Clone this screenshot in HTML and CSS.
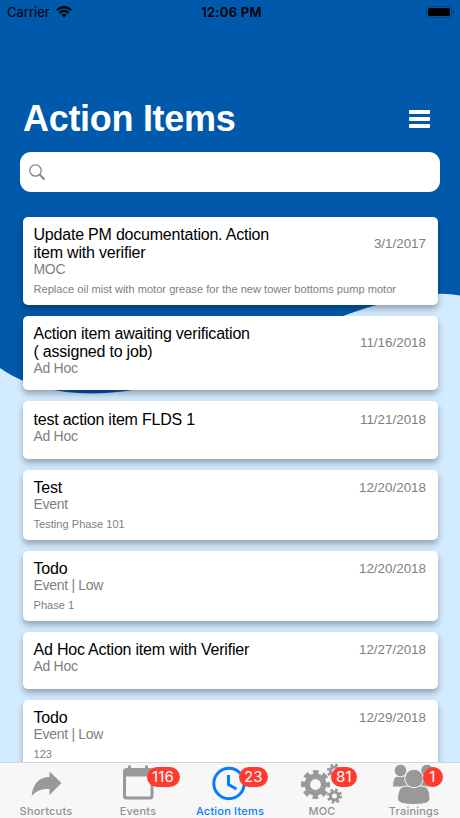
FILE: index.html
```
<!DOCTYPE html>
<html lang="en">
<head>
    <meta charset="UTF-8">
    <meta name="viewport" content="width=device-width, initial-scale=1.0">
    <title>Action Items</title>
    <link rel="stylesheet" href="styles.css">
</head>
<body>
    <!-- Background wave -->
    <svg class="wave" viewBox="0 0 460 818">
        <path fill="#0059ab" d="M0 0H460V295.500Q442 292 420 295.500C396 299 372 305.500 343 316C270 342 190 383 122 391.500C76 397 33 391 0 368Z"/>
    </svg>

    <div class="screen">
        <!-- Status bar -->
        <div class="status">
            <div class="carrier">
                <span>Carrier</span>
                <svg width="16" height="12" viewBox="0 0 16 12" fill="none" stroke="#000" stroke-width="2.200">
                    <path d="M.8 4.300Q8-2.300 15.200 4.300M3.300 7Q8 2.800 12.700 7"/>
                    <path d="M5.300 8.800Q8 6.500 10.700 8.800L8 11.600Z" fill="#000" stroke="none"/>
                </svg>
            </div>
            <div class="time">12:06 PM</div>
            <svg class="battery" width="29" height="12" viewBox="0 0 29 12">
                <rect x=".5" y=".5" width="25" height="11" rx="3" fill="none" stroke="#06427d"/>
                <rect x="2" y="2" width="22" height="8" rx="1.500"/>
                <path d="M27 4.500q1.500 1.500 0 3z"/>
            </svg>
        </div>

        <header>
            <h1>Action Items</h1>
            <div class="menu"><span></span><span></span><span></span></div>
        </header>

        <div class="search">
            <svg width="17" height="17" viewBox="0 0 17 17" fill="none" stroke="#808080">
                <circle cx="6.500" cy="6.500" r="5.700" stroke-width="1.200"/>
                <path d="M10.700 10.700L15.500 15.500" stroke-width="1.900"/>
            </svg>
        </div>

        <main class="list">
            <div class="card card-tall">
                <div class="row">
                    <h2>Update PM documentation. Action<br>item with verifier</h2>
                    <time>3/1/2017</time>
                </div>
                <p class="type">MOC</p>
                <p class="desc">Replace oil mist with motor grease for the new tower bottoms pump motor</p>
            </div>
            <div class="card card-double">
                <div class="row">
                    <h2>Action item awaiting verification<br>( assigned to job)</h2>
                    <time>11/16/2018</time>
                </div>
                <p class="type">Ad Hoc</p>
            </div>
            <div class="card card-short">
                <div class="row"><h2>test action item FLDS 1</h2><time>11/21/2018</time></div>
                <p class="type">Ad Hoc</p>
            </div>
            <div class="card">
                <div class="row"><h2>Test</h2><time>12/20/2018</time></div>
                <p class="type">Event</p>
                <p class="desc">Testing Phase 101</p>
            </div>
            <div class="card">
                <div class="row"><h2>Todo</h2><time>12/20/2018</time></div>
                <p class="type">Event | Low</p>
                <p class="desc">Phase 1</p>
            </div>
            <div class="card card-short">
                <div class="row"><h2>Ad Hoc Action item with Verifier</h2><time>12/27/2018</time></div>
                <p class="type">Ad Hoc</p>
            </div>
            <div class="card">
                <div class="row"><h2>Todo</h2><time>12/29/2018</time></div>
                <p class="type">Event | Low</p>
                <p class="desc">123</p>
            </div>
        </main>

        <!-- Tab bar -->
        <nav>
            <a class="tab">
                <svg width="44" height="42" viewBox="0 0 44 42" fill="#999">
                    <path d="M7.500 33C9 21 15 14 25.500 14V8.500L37.500 20L25.500 32V26C18 25.500 12 28 7.500 33Z"/>
                </svg>
                <span>Shortcuts</span>
            </a>
            <a class="tab">
                <svg width="44" height="42" viewBox="0 0 44 42" fill="#999">
                    <path fill-rule="evenodd" d="M10.500 5H12V2.500H15V5H29V2.500H32V5H34Q37.500 5 37.500 8.500V33Q37.500 36.500 34 36.500H10.500Q7 36.500 7 33V8.500Q7 5 10.500 5ZM10 13.500V32Q10 33.500 11.500 33.500H33Q34.500 33.500 34.500 32V13.500Z"/>
                </svg>
                <b class="badge">116</b>
                <span>Events</span>
            </a>
            <a class="tab active">
                <svg width="44" height="42" viewBox="0 0 44 42" fill="none" stroke="#087cff" stroke-width="3">
                    <circle cx="21" cy="20.500" r="15.200"/>
                    <path d="M20.500 12V21.500L28.500 26"/>
                </svg>
                <b class="badge">23</b>
                <span>Action Items</span>
            </a>
            <a class="tab">
                <svg width="44" height="42" viewBox="0 0 44 42" fill="none" stroke="#999">
                    <circle cx="15.500" cy="21.500" r="8.200" stroke-width="5.500"/>
                    <circle cx="15.500" cy="21.500" r="12.300" stroke-width="4.500" stroke-dasharray="5.600 4.060" stroke-dashoffset="2.800"/>
                    <circle cx="34.500" cy="8" r="4" stroke-width="3"/>
                    <circle cx="34.500" cy="8" r="6.300" stroke-width="2.600" stroke-dasharray="2.474"/>
                    <circle cx="34.500" cy="33" r="4" stroke-width="3"/>
                    <circle cx="34.500" cy="33" r="6.300" stroke-width="2.600" stroke-dasharray="2.474"/>
                </svg>
                <b class="badge">81</b>
                <span>MOC</span>
            </a>
            <a class="tab">
                <svg width="44" height="42" viewBox="0 0 44 42" fill="#999" stroke="#f7f7f7">
                    <path d="M.5 24Q.5 13 6 13H15Q20 13 20 24ZM24 24Q24 13 29 13H37Q43 13 43 24Z"/>
                    <circle cx="8.500" cy="7.500" r="6.300"/>
                    <circle cx="35" cy="7.500" r="6.300"/>
                    <path d="M5.500 36Q5.500 23 14 23H30Q38 23 38 36Q38 41.500 22 41.500Q5.500 41.500 5.500 36Z"/>
                    <circle cx="22" cy="15.500" r="9.300"/>
                </svg>
                <b class="badge">1</b>
                <span>Trainings</span>
            </a>
        </nav>
    </div>
</body>
</html>
```
FILE: styles.css
```
* {
    box-sizing: border-box;
}
body {
    margin: 0;
    background-color: #d3ebff;
    font-family: "Liberation Sans", Arial, sans-serif;
    overflow: hidden;
}
h1, h2, p {
    margin: 0;
    font-weight: normal;
}
.wave {
    position: absolute;
    top: 0;
    left: 0;
    width: 460px;
    height: 818px;
}
.screen {
    position: relative;
    display: flex;
    flex-direction: column;
    width: 460px;
    height: 818px;
}
/* Status bar */
.status {
    display: grid;
    grid-template-columns: 1fr 80px 1fr;
    align-items: center;
    height: 24px;
    padding: 0 5px 0 7px;
    font-family: Inter, sans-serif;
    font-size: 13px;
}
.carrier {
    display: flex;
    align-items: center;
    gap: 6px;
}
.time {
    padding-left: 1px;
    text-align: center;
    font-weight: 600;
    letter-spacing: 0.3px;
    white-space: nowrap;
}
.battery {
    justify-self: end;
}
header {
    display: flex;
    justify-content: space-between;
    align-items: center;
    height: 44px;
    margin-top: 73px;
    padding: 0 30px 0 23px;
}
h1 {
    color: #fff;
    font-size: 36px;
    font-weight: bold;
    letter-spacing: -0.3px;
}
.menu {
    display: flex;
    flex-direction: column;
    gap: 3px;
}
.menu span {
    width: 21px;
    height: 4px;
    border-radius: 1px;
    background: #fff;
}
.search {
    display: flex;
    align-items: center;
    height: 40px;
    margin: 11.4px 20px 0;
    padding-left: 9px;
    border-radius: 11px;
    background: #fff;
    flex-shrink: 0;
}
/* Cards */
.list {
    flex: 1;
    min-height: 0;
    overflow: hidden;
    display: flex;
    flex-direction: column;
    gap: 11px;
    padding: 24.6px 22.5px 0;
}
.card {
    flex: none;
    height: 70px;
    padding: 9.4px 11.5px 0 11px;
    border-radius: 5px;
    background: #fff;
    box-shadow: 0 4px 6px rgba(0, 0, 0, 0.3);
}
.card-tall {
    height: 88px;
}
.card-double {
    height: 74.5px;
}
.card-short {
    height: 57.3px;
}
.row {
    display: flex;
    justify-content: space-between;
    align-items: center;
}
h2 {
    font-size: 16px;
    line-height: 18px;
    letter-spacing: -0.21px;
    color: #000;
    white-space: nowrap;
}
time {
    font-size: 13.4px;
    line-height: 16px;
    color: #808080;
}
.type {
    font-size: 14px;
    line-height: 15px;
    letter-spacing: -0.3px;
    color: #808080;
}
.desc {
    margin-top: 5px;
    font-size: 11.1px;
    line-height: 14px;
    color: #808080;
    white-space: nowrap;
}
/* Tab bar */
nav {
    position: relative;
    display: flex;
    height: 56px;
    flex-shrink: 0;
    background: #f7f7f7;
    border-top: 1px solid #d5d5d5;
}
.tab {
    position: relative;
    flex: 1;
    display: flex;
    flex-direction: column;
    align-items: center;
    color: #929292;
    font-family: Inter, sans-serif;
    font-size: 11px;
    font-weight: 500;
    line-height: 12px;
    letter-spacing: 0.2px;
}
.tab svg {
    flex: none;
}
.active {
    color: #087cff;
}
.badge {
    position: absolute;
    top: 3.5px;
    left: 54.5px;
    min-width: 20px;
    height: 20px;
    padding: 0 5.5px;
    border-radius: 10px;
    background: #ff3b30;
    color: #fff;
    font-size: 15px;
    font-weight: 400;
    line-height: 20px;
    text-align: center;
}
```
